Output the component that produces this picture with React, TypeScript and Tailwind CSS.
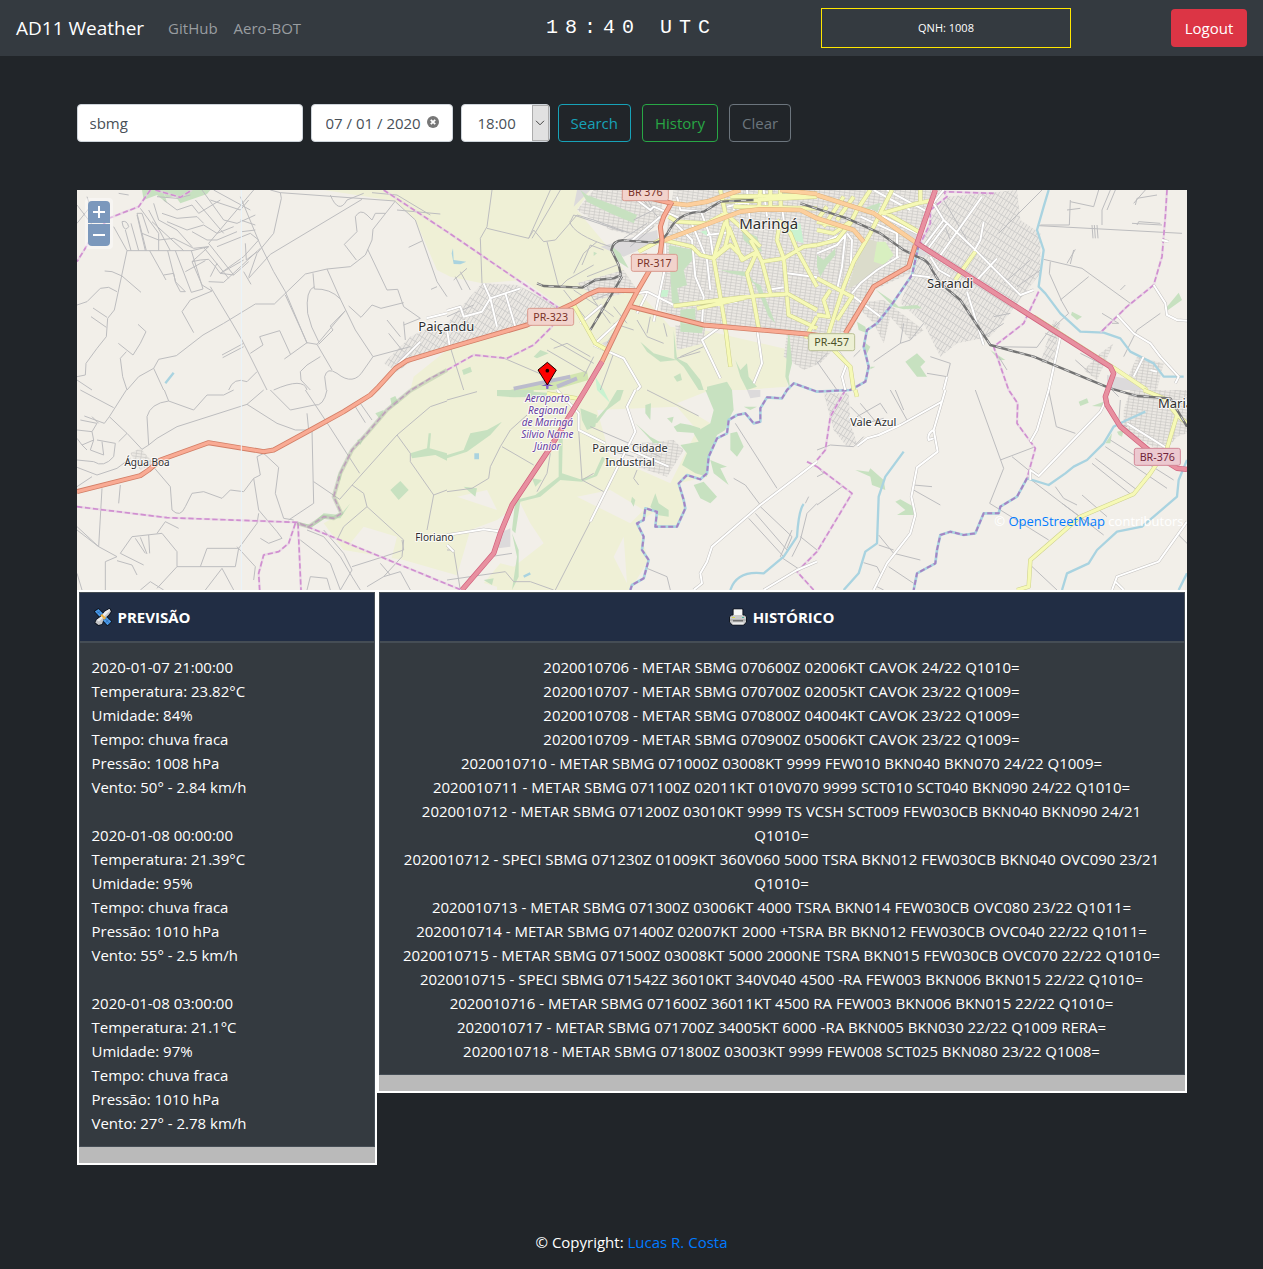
import { useState } from 'react';

const forecast = [
  ['2020-01-07 21:00:00', '23.82°C', '84%', '1008 hPa', '50° - 2.84 km/h'],
  ['2020-01-08 00:00:00', '21.39°C', '95%', '1010 hPa', '55° - 2.5 km/h'],
  ['2020-01-08 03:00:00', '21.1°C', '97%', '1010 hPa', '27° - 2.78 km/h'],
];

const history = [
  '2020010706 - METAR SBMG 070600Z 02006KT CAVOK 24/22 Q1010=',
  '2020010707 - METAR SBMG 070700Z 02005KT CAVOK 23/22 Q1009=',
  '2020010708 - METAR SBMG 070800Z 04004KT CAVOK 23/22 Q1009=',
  '2020010709 - METAR SBMG 070900Z 05006KT CAVOK 23/22 Q1009=',
  '2020010710 - METAR SBMG 071000Z 03008KT 9999 FEW010 BKN040 BKN070 24/22 Q1009=',
  '2020010711 - METAR SBMG 071100Z 02011KT 010V070 9999 SCT010 SCT040 BKN090 24/22 Q1010=',
  '2020010712 - METAR SBMG 071200Z 03010KT 9999 TS VCSH SCT009 FEW030CB BKN040 BKN090 24/21 Q1010=',
  '2020010712 - SPECI SBMG 071230Z 01009KT 360V060 5000 TSRA BKN012 FEW030CB BKN040 OVC090 23/21 Q1010=',
  '2020010713 - METAR SBMG 071300Z 03006KT 4000 TSRA BKN014 FEW030CB OVC080 23/22 Q1011=',
  '2020010714 - METAR SBMG 071400Z 02007KT 2000 +TSRA BR BKN012 FEW030CB OVC040 22/22 Q1011=',
  '2020010715 - METAR SBMG 071500Z 03008KT 5000 2000NE TSRA BKN015 FEW030CB OVC070 22/22 Q1010=',
  '2020010715 - SPECI SBMG 071542Z 36010KT 340V040 4500 -RA FEW003 BKN006 BKN015 22/22 Q1010=',
  '2020010716 - METAR SBMG 071600Z 36011KT 4500 RA FEW003 BKN006 BKN015 22/22 Q1010=',
  '2020010717 - METAR SBMG 071700Z 34005KT 6000 -RA BKN005 BKN030 22/22 Q1009 RERA=',
  '2020010718 - METAR SBMG 071800Z 03003KT 9999 FEW008 SCT025 BKN080 23/22 Q1008=',
];

/* Map line work. Each sheet covers 1110 x 600 units of the 3330 x 1200 map. */
type Sheet = { x: number; y: number; tracks: string; white: string; yellow: string; wood: string };

const sheets: Sheet[] = [
  {
    x: 0,
    y: 0,
    tracks:
      'M150 182L345 182L395 170M150 182L112 360L92 385L88 440L60 475L27 520L25 555L0 560M110 110L150 182M218 182L267 270M260 255L290 250L295 275L325 305L310 305L297 280L272 182M295 182L343 307L378 297L343 182M345 215L375 285L405 303M180 70L208 182M190 55L245 130L245 182M180 70L195 70L215 130M230 40L245 90L300 120L345 170M215 60L280 182M225 95L320 182M260 30L300 60L345 45L365 70L430 30M255 70L300 85L360 80L380 100M270 95L330 120L380 105L420 130L470 110M195 130L245 150L290 145L350 175L395 170M345 125L390 150L420 150L480 125M355 30L440 130M375 0L440 90L480 100L535 75M395 170L345 215L370 210L395 208L415 230L430 250L500 210M395 160L470 255M380 172L455 265M325 245L385 212M530 0L395 160M420 170L520 130L545 150L500 200L430 250L470 255L515 215M400 260L420 220M395 275L440 277L550 175M400 30L490 60L515 30M240 20L300 25L340 15M205 182L180 75M162 100L185 182M145 120L162 182M135 95Q150 90 155 110Q145 125 138 108ZM410 0L520 60M505 160L508 210L540 185M490 90L535 105M495 125L535 120M400 290L460 390L495 450L540 540L570 600M490 20L550 165L590 245L625 305L690 460M0 345L30 335L70 295L95 292L120 305M83 243L105 245L135 258L192 307M48 354L90 382M42 380L88 412M183 403L207 425L190 460L168 495L124 460M148 485L130 505L137 560L150 600M315 365L340 330L405 303M315 365L350 428M150 600L185 560L230 535L245 508L298 497L378 435L440 400L535 342L592 342L685 252L750 237L820 230L865 195L885 150L888 118L955 33L610 8L580 0M610 8L613 25L590 130L540 190L515 262M855 28L580 193L515 265M500 245L522 283M955 35L1015 90L1080 275L1110 320M838 210L802 163L840 125L835 80Q850 55 870 75L885 90L895 70L925 70M872 178L930 300L962 298L980 350L1030 385M750 237L790 327L835 420L888 500L860 540Q830 590 780 550Q750 530 743 560L748 600M708 250L712 297Q760 295 790 327M712 290Q685 300 692 370Q700 410 725 455M625 315L690 458L720 463L805 362L760 408L768 420L725 463M690 458L622 507M720 463L765 540M520 490L558 465L548 440L608 422L640 492M435 495L500 460M437 503L500 470M815 348L852 382L885 345L912 355L980 338M888 500L1000 470M995 172L1035 153M1062 298L1080 290M0 570L45 600M230 535L260 600M760 15Q785 75 810 30L860 10M455 600Q470 560 510 575L540 545M590 600Q680 560 690 600M670 545L690 525L730 500M670 545L672 570L700 600M980 405L1030 385M980 395L985 450M930 390L970 440M935 430L975 480M885 8L960 15L1060 75M960 60L1090 72M0 45L50 110M0 100L40 50L30 20M125 10L155 15',
    white: 'M1048 385L1110 370M1030 455L965 520',
    yellow: '',
    wood: 'M195 0L260 0L265 25L295 18L310 40L390 12L400 0L260 0L270 40L240 15L200 30Z',
  },
  {
    x: 1110,
    y: 0,
    tracks:
      'M135 0L120 110L100 145L105 280M120 115L245 145L310 0M245 145L260 120L290 155L325 150L390 75L440 90L550 130M340 0L255 145M300 155L335 290M370 95L380 75L530 125M368 95Q380 135 490 170M470 180L430 165L405 225M410 190L380 250M410 190L450 155M20 270L60 235M25 260L45 300M40 245L70 300M420 260L510 225M340 290L360 270L440 225M420 290L440 330L510 300M350 300L420 390M380 300L470 360M440 330L490 400M460 350L500 380M500 350L540 400M550 200L600 190M590 10L620 60L560 90M580 20L640 90M620 110L550 170M600 100L530 145M0 440L50 600M160 500L300 560M310 445L440 520M300 480L420 550M320 475L360 460L430 500M540 360L480 460M500 400L560 420M570 390L600 440L650 460M610 380L600 430M690 505L760 485M700 500L770 470M650 400L660 440M500 490L460 600M440 500L410 560M0 380L80 345',
    white:
      'M0 362L40 350L50 380L105 365L130 325L220 295M110 280L130 325L150 410M175 310L205 410M0 420L10 480M440 465L530 505L580 590L570 600M450 455L520 390L545 350M570 310L600 305L680 345M600 310L570 370M655 160L655 230L640 300L620 395M400 400L465 345M570 30L610 60L620 50L700 85M550 155L640 80M685 100L735 150L745 260L770 320L765 400M730 90L780 210L790 300M690 20L700 60L780 65M760 60L790 140L800 210M820 410L765 450L820 565M930 415L945 520L920 580M770 350L870 335M960 300L1010 292M1020 250L1110 262M840 50L970 20M860 60L870 30M950 0L960 80M1000 10L1010 90M900 0L910 110M780 135L860 125',
    yellow:
      'M820 0L835 70L845 130L835 170L800 205L760 195L735 170L650 150M835 70L880 110L940 170M1110 20L830 35M940 0L935 60M970 0L970 60M1000 0L1002 60M835 95L800 205L820 320L835 410L850 530M845 110L885 210L930 185L910 150M800 205L850 165L890 205M930 185L910 230L900 250L918 320L935 415M930 185L945 215L1010 205L1070 170L1110 165M945 215L970 310M1010 205L1020 310L1110 360M1020 320L1025 375L1110 415M680 348L820 330L920 318L1020 312M835 70L780 100L690 95L665 80M1010 205L990 150L1000 90M1050 180L1030 130L990 90M1050 180L1110 290M640 150L575 185M375 335L445 460L480 480M1060 0L1075 20L1110 10M860 50L1110 55M850 20L1110 15M1110 380L1075 445M750 355L900 322',
    wood: 'M400 0L420 15L500 45L570 75L560 100L490 70L420 35ZM490 165L520 190L545 235L515 215ZM665 165L740 180L745 200L710 240L720 285L690 295L700 350L675 340ZM700 360L745 355L745 400L700 400ZM700 400L770 405L765 430L700 425ZM885 120L930 140L945 185L925 180L890 150ZM440 185L450 190L440 198ZM820 240L900 245L920 275L940 285L985 400L965 380L925 285L900 260L850 250ZM680 420L690 505L720 520L760 570L770 600L755 600L710 530L682 505ZM580 455L620 490L690 510L640 515L600 485ZM680 560L700 550L705 570L690 575ZM865 510L880 540L900 520L905 560L930 590L900 600L880 560ZM1025 410L1035 520L1025 560L1030 600L1015 560ZM260 500L280 480L305 490L270 505ZM45 540L70 530L75 545L50 555ZM780 590L840 575L855 600L780 600Z',
  },
  {
    x: 2220,
    y: 0,
    tracks:
      'M760 30L757 105L670 105M665 107L1095 130M760 35L830 50L845 0M855 105L855 60L880 0M870 60L895 0M675 0L545 130M945 100L1035 105M960 105L965 95L1030 100M680 208L795 235L940 340L905 375L850 425M700 215L697 250L735 335L755 370L690 430L660 472M730 330L815 260M530 470L660 472M750 220L775 178M760 222L770 180M685 430L720 445M855 370L905 400L885 400M775 510L820 550M790 490L860 525M800 475L870 515M925 285L910 300M825 105L828 145M832 105L835 145M840 105L843 145M950 40L985 0M955 45L960 25L1020 15M350 20L400 150M380 30L450 150M260 400L250 460L170 515M320 400L280 450L250 460M1030 370L960 420L920 500M545 500L570 540M500 440L560 400M530 380L580 370M640 210L560 280M670 240L600 290M0 515L60 600M30 490L0 520M40 430L60 460M340 500L400 520L390 560L330 550M130 480L110 500M750 60L790 55',
    white:
      'M0 190L60 165L85 135L75 230L60 300M90 130L105 150L100 250M245 200L180 240L130 280L105 310M340 25L380 90L470 175L610 315L650 300M495 20L360 210M500 95L490 150L470 185M390 100L330 180M380 90L320 170M340 200L365 240L400 260M540 205L480 270M450 305L500 465M285 255L340 262M110 320L190 380M390 560L380 600M730 440L695 600M900 375L950 430L1000 460L1030 500L1085 560L1075 580M1010 285L1045 340L1050 375L1080 390L1110 392M980 500L950 560M1000 540L1020 545M60 480L90 520L75 560L85 600M1035 150L1055 155M160 60L300 130M210 0L340 70M170 0L280 60M0 165L80 130M130 80L240 130L240 200M380 0L340 50',
    yellow:
      'M160 0L120 60L100 100L60 150L0 165M225 0L160 130L110 215L80 290L35 430M0 95L70 110M0 120L50 130L100 95M195 70L300 40L350 30M200 65L305 125M310 0L310 40M0 265L105 320L60 390M0 375L35 380L20 330L40 300M50 480L100 530L110 600M475 185L415 270M650 380L900 540L990 600M110 20L60 90M80 20L20 110M30 50L0 90',
    wood: 'M140 55L190 38L180 70L150 70ZM265 515L300 490L325 515L310 530L330 560L300 560ZM1050 350L1085 308L1095 330L1050 362ZM765 365L795 380L780 390L762 375ZM175 298L230 335L245 350L300 345L315 355L260 358L230 350ZM0 195L20 210L55 175L55 195L30 225L10 260L0 230ZM120 395L145 410L150 430L125 420ZM160 530L175 530L160 538ZM520 480L565 510L545 510ZM140 455L160 470L145 500Z',
  },
  {
    x: 0,
    y: 600,
    tracks:
      'M148 0L97 80L82 100L22 78M97 80L150 130L195 178L215 165L210 80Q220 40 275 33L262 0M275 33L350 60L390 15L440 15L470 0M10 0L110 53M215 165L240 145L300 110L510 43L560 0M510 43L600 100L655 120L705 120L710 340L635 390M710 275L788 328L830 280L960 135L1060 50L1110 33M960 135L1000 190L1000 215L1070 315L1110 300M1070 315L1050 420M685 0L750 98L848 250M750 0Q740 50 712 45L640 60L580 0M825 285L860 310L870 350L980 450L975 500L920 560M870 350L800 410L780 450M233 235L280 290L285 360Q310 385 325 350L345 310L380 305L435 325L460 300L500 305L530 265L550 255L540 200L560 190L605 232L595 310L620 385L650 390M530 265L545 360L600 425L615 445L575 460L550 445M545 370L540 400L485 475L390 475L370 530M485 475L475 530L300 530L300 485L255 430L165 440L130 490M300 530L240 595M75 295L65 470M65 470L0 410M0 232L60 255L120 235L160 205M0 290L45 260M130 285L125 340M0 420L65 470L120 500L85 515L85 600M120 512L165 525L180 555M130 490L200 525M175 445L205 490M190 442L210 492M215 435L218 490M240 430L265 395L305 415M0 120L45 125L50 150L15 165L0 145M10 90L60 100L45 125M45 80L65 100M60 150L115 160L110 200Q80 235 50 215L0 210M50 150L40 180L80 195L75 155M15 165L30 180M150 130L125 155M435 535L385 600M435 535L470 600M480 470L535 530L530 570M670 450L760 520L790 600M690 420L740 440L790 500L825 560L850 600M740 420L800 490L825 540L790 600M690 600L700 560L750 565L760 600M825 530L920 500L980 480L975 450M870 590L920 560L970 545L1000 600M910 520L940 555M835 50L865 98M850 40L885 90M0 550L15 600M190 600L220 575L260 600M695 120L690 70',
    white: '',
    yellow: '',
    wood: 'M940 300L970 273L995 300L965 330ZM1000 190L1050 175L1055 130L1062 130L1058 175L1110 190L1110 212L1075 195L1005 205ZM940 25L955 18L965 40L945 50ZM895 70L920 60L910 90ZM660 395L700 405L740 370L790 375L820 340L790 385L745 385L700 415ZM840 150L860 145L850 165ZM780 265L800 220L790 270Z',
  },
  {
    x: 1110,
    y: 600,
    tracks:
      'M0 30L90 5M240 75L190 120L160 170L130 230L125 265L75 295L0 305M165 170L260 225M310 190L300 250L270 305M395 120L405 270L470 305M405 270L440 250M430 395L325 600M430 110L640 200M600 0L755 78M865 100L990 295M860 265L895 285L940 345M905 385L1010 500M925 370L1020 480M940 350L1035 440L1020 475M1035 420L1000 500L1060 540M1110 340L1080 370L1060 450L1035 500M1085 320L1075 340M1060 440L1110 480M600 535L660 560L670 600M0 480L20 480L40 600M130 500L195 490M0 570L175 545L200 575L250 575L320 600M480 180L560 200M570 240L560 265L575 285',
    white:
      'M330 0L395 70L395 120L475 160M565 0L540 50L565 125L430 395M550 180L665 230M1110 215L940 345L795 470L780 515L760 550L765 580L740 600M0 435L110 418L165 425M0 465L20 485M950 600L1050 540L1110 515',
    yellow: 'M300 10L390 25',
    wood: 'M150 0L260 0L260 5L320 10L310 20L200 22L150 18ZM400 55L450 75L445 110L420 120L405 90ZM660 85L680 80L675 100ZM680 110L700 100L730 105L760 115L755 130L690 125ZM775 0L855 0L860 60L845 90L835 120L810 135L790 190L780 260L745 250L705 225L720 190L700 165L755 155L740 130L790 100L800 60ZM565 100L610 140L645 160L620 160ZM595 45L612 40L610 90L595 70ZM850 130L870 125L890 170L870 200L850 180ZM740 285L770 275L810 320L790 340L760 325ZM790 210L840 230L820 235L845 285L800 250ZM610 350L625 310L635 340L665 360L665 380L630 375ZM555 320L565 330L560 350L552 335ZM510 0L530 0L520 30L480 60L450 100L440 95L480 50ZM335 110L348 110L345 250L400 268L440 255L465 200L475 205L450 258L405 275L340 270L280 320L220 335L205 430L195 420L205 330L265 315L335 260ZM255 265L285 270L265 290ZM0 195L50 180L70 130L120 120L165 95L130 135L60 185L0 205ZM50 290L90 295L85 320ZM195 430L215 480L215 560L195 600L210 500ZM110 570L140 565L135 585ZM890 50L930 50L910 60Z',
  },
  {
    x: 2220,
    y: 600,
    tracks:
      'M475 0L560 235L518 340L695 450M695 0L718 110L775 130M550 210L650 172M585 200L640 245M630 260L860 435M825 220L940 312M835 205L960 300M865 170L1050 295M880 150L1070 270M735 340L830 410M795 315L870 380M715 290L740 325L780 345M0 345L75 290M0 230L20 250L0 260M290 285L345 290M290 300L370 345M185 435L230 490L310 510M185 465L230 480M215 530L290 580M140 518L180 530L190 550M180 590L200 600M220 0L270 90M235 0L260 60M640 525L720 600M1085 435L1110 460M120 80L190 40L210 70M110 110L200 85M100 50L160 110M130 40L180 100M910 30L905 100L930 110M885 0L905 20M0 180L40 165L110 170L140 140',
    white:
      'M385 0L350 120L362 185L300 232L283 320L295 375L280 430L210 520L170 600M350 120Q330 130 335 150L350 145M695 0L660 120L640 155M865 35L850 65L665 258L640 240L640 270M375 35L250 105L185 135L150 145L120 168M930 100L1050 175M1110 395L1025 515L900 560L885 600M895 575L920 600',
    yellow: 'M115 0L120 20M980 0L1040 25L1080 75L1110 100M1080 75L1050 175L1000 250L950 312L790 380L640 510L635 590L600 600',
    wood: 'M115 240L155 245L160 235L200 270L205 300L165 285L160 260ZM235 335L250 328L290 350L290 375L240 375L265 360ZM785 35L810 25L815 38L790 48ZM825 48L860 35L855 50ZM865 160L885 130L880 160ZM900 125L920 120L915 140L905 135Z',
  },
];

const fineStreets = [
  'M1000 440L1060 410L1110 400L1215 280L1320 285L1450 350L1350 400L1110 478L1010 510L960 545L920 520Z',
  'M2560 80L2610 20L2820 0L2830 90L2890 130L2890 250L2790 380L2740 440L2640 460L2590 500L2540 400L2470 340L2520 210Z',
  'M2240 610L2315 610L2320 700L2340 760L2310 770L2270 720Z',
  'M2930 510L2950 400L2930 390L2890 520Z',
];

const streets = [
  'M1550 0L1750 0L1760 90L1690 140L1600 120L1500 60Z',
  'M1500 280L1640 240L1680 300L1560 330Z',
  'M1790 0L2590 0L2520 160L2500 250L2390 300L2320 425L2230 520L2180 540L2120 500L2130 430L1880 405L1750 360L1760 180Z',
  'M1795 405L1885 410L1880 460L1800 480Z',
  'M3070 490L3110 460L3060 570L3020 540Z',
  'M3140 660L3160 600L3330 600L3330 730L3300 740L3260 790L3140 720Z',
  'M3180 500L3260 520L3240 600L3140 590Z',
  'M1680 760L1790 750L1820 780L1770 860L1680 830Z',
  'M160 790L190 775L230 820L190 840Z',
  'M2330 340L2420 330L2540 420L2500 450L2440 380L2420 460L2390 400Z',
];

const paths = {
  primary:
    'M0 905L190 857L215 840L250 810L395 758L560 785L590 780L700 720L800 665L880 615L905 590L955 535L990 512L1110 475L1350 405L1490 340L1530 315L1565 300L1680 302M1785 35L1760 80L1750 110L1755 150L1750 190L1715 245L1680 305L1630 400L1575 515M1700 20L1785 40M1655 348L1880 405L2190 432L2290 445M2515 165L2495 230L2390 290L2305 430',
  trunk:
    'M1575 515L1525 600L1415 780L1305 945L1270 1030L1250 1090L1155 1200M2575 0L2520 160L3100 530L3110 550L3085 620L3090 645L3130 710L3220 785L3300 835L3330 838',
  secondary:
    'M1770 38L1830 45L1890 35L1990 0M1750 155L1990 65L2050 58L2170 60L2220 85L2330 120L2360 155M2220 15L2390 70L2520 160M2110 0L2220 12',
  rail: 'M1380 280L1400 288L1515 293L1555 270L1610 265L1632 255L1625 225L1603 180Q1610 145 1650 152L1735 158Q1760 155 1780 115Q1810 65 1880 65L1930 35L2030 30M1635 260L1600 320L1540 420M2170 40L2310 85L2410 130L2480 180L2520 200Q2555 210 2565 240L2590 280L2650 330L2710 420L2740 465L2870 500L3100 595L3180 618L3280 625L3330 710',
  river:
    'M2915 0L2900 50L2880 120L2900 180L2885 290L2905 310L2950 370L3010 425L3080 428L3130 445L3160 485L3230 520L3260 560L3320 560M2850 865L2915 885L2965 850L2990 830L3030 810L3080 760L3110 710L3150 690L3205 665M2480 785L2425 860L2405 920L2400 1060L2365 1085L2345 1150L2300 1200M3330 810L3305 870L3300 920L3195 1010L3120 1025L3060 1080L3035 1120L2970 1150L2955 1200M2180 942Q2165 960 2160 1040L2120 1100L2060 1150Q1980 1140 1960 1200M3330 1150L3305 1200M265 580L290 548M1340 1160L1360 1150',
  border:
    'M220 0L185 50L95 85L40 150L0 215M235 0L310 22L345 0M920 0L1110 125L1440 350L1425 410L1370 465L1290 505L1190 495L1110 540L1060 565L1000 602L930 660L870 730L825 780L790 850L770 920L793 970L770 985L740 980L695 1010L660 1000M0 950L270 983L660 997L1250 1240M663 1000L672 1200M655 1000L635 1060L605 1085L560 1095L545 1150L548 1200M3270 0L3265 80L3255 200L3230 285L3150 350L3070 428M2885 305L2840 400L2750 470L2795 600L2822 640L2820 700L2875 775L2850 865M2305 600L2260 680L2245 780L2220 810M2220 830L2325 910L2220 1085L2160 1145L2210 1200M2190 815L2220 830M2525 170L2560 100L2560 60L2610 20L2600 5L2750 10',
  ford: 'M2525 165L2505 255L2440 350L2400 400L2370 420L2360 470L2375 530L2365 575L2320 600L2220 605L2150 580L2130 600L2115 625L2070 622L2050 655L2050 695L2030 700L2005 670L1980 675L1955 690L1950 730L1920 745L1895 800L1890 850L1870 868L1830 855L1805 880L1820 930L1825 955L1800 1010L1735 1010L1740 965L1705 955L1700 990L1680 1000L1700 1040L1695 1080L1715 1110L1700 1165L1665 1185L1660 1200M2850 865L2820 920L2770 950L2765 970L2720 970L2695 1030L2660 1035L2620 1025L2590 1035L2580 1080L2575 1120L2520 1150L2510 1200',
};

function Shield({ x, y, label, fill, line, ink }: { x: number; y: number; label: string; fill: string; line: string; ink: string }) {
  return (
    <g>
      <rect x={x} y={y} width="138" height="51" rx="6" fill={fill} stroke={line} strokeWidth="3" />
      <text x={x + 69} y={y + 37} textAnchor="middle" fontSize="32" fill={ink}>{label}</text>
    </g>
  );
}

function MapDrawing() {
  return (
    <svg viewBox="0 0 3330 1200" preserveAspectRatio="xMidYMid slice" className="block h-[400px] w-full" role="img" aria-label="Mapa de Maringá" fontFamily="'Noto Sans', sans-serif">
      <defs>
        <pattern id="streets" width="15" height="9" patternUnits="userSpaceOnUse" patternTransform="rotate(8)">
          <rect width="15" height="9" fill="#ebe8e3" />
          <path d="M0 1H15M1 0V9" stroke="#cbc9c7" strokeWidth="2.5" />
        </pattern>
        <pattern id="streetsSteep" width="10" height="22" patternUnits="userSpaceOnUse" patternTransform="rotate(32)">
          <rect width="10" height="22" fill="#ebe8e3" />
          <path d="M0 1H10M1 0V22" stroke="#cbc9c7" strokeWidth="2.5" />
        </pattern>
      </defs>
      <rect width="3330" height="1200" fill="#f2efe9" />
      <path d="M740 0L955 33L1015 90L1080 240L1120 260L1215 280L1340 270L1450 350L1400 400L1110 480L1010 560L1000 600L930 660L870 730L825 780L790 850L770 920L793 970L740 1000L800 1080L980 1110L1260 1190L1260 1200L1660 1200L1715 1110L1680 1000L1740 960L1740 1010L1800 1010L1825 955L1805 880L1890 860L1900 700L1800 640L1900 600L2000 600L2130 590L2140 480L1880 420L1780 410L1680 300L1600 180L1500 60L1540 0Z" fill="#eff0d6" />
      <path d="M1180 1020L1260 990L1330 940L1360 1000L1400 1060L1310 1130L1270 1120L1220 1180L1130 1190ZM1560 660L1800 650L1860 720L1780 880L1600 800ZM1600 900L1700 960L1660 1000L1500 920ZM1610 1100L1640 1040L1650 1180ZM1140 920L1230 900L1260 960ZM860 1010L960 1040L940 1120L820 1060Z" fill="#f2efe9" />
      {fineStreets.map((d) => (
        <path key={d} d={d} fill="url(#streetsSteep)" />
      ))}
      {streets.map((d) => (
        <path key={d} d={d} fill="url(#streets)" />
      ))}
      <path d="M1570 170L1740 120L1745 155L1640 200ZM2500 105L2560 190L2530 200L2480 140ZM2010 600L2050 600L2050 620L2020 625ZM1900 595L1935 600L1930 620L1895 615ZM3090 555L3170 570L3200 600L3090 600ZM1575 460L1620 440L1600 480ZM1500 0L1540 0L1490 50ZM1265 1030L1300 1015L1300 1070L1265 1075ZM970 500L990 480L980 520L940 545Z" fill="#dcdadb" />
      <path d="M2310 300L2350 180L2370 145L2400 155L2420 220L2360 270Z" fill="#dbdccb" />
      <path d="M2400 155L2425 155L2450 195L2420 225L2390 215Z" fill="#d8efc0" />
      <path d="M2360 55L2412 38L2400 68ZM1750 300L1775 300L1770 320L1750 320ZM2135 110L2170 100L2180 160L2150 150ZM1555 560L1580 600L1600 640L1560 600ZM1870 125L1890 120L1895 140Z" fill="#c9f2d0" />
      <g fill="#c7e1c0">
        {sheets.map((s) => (
          <path key={`${s.x}-${s.y}`} d={s.wood} transform={`translate(${s.x},${s.y})`} />
        ))}
      </g>
      <path d="M1300 600L1530 542L1535 570L1430 600Z" fill="#d2e5b0" />
      <path d="M1310 596L1480 560M1440 590L1500 565" stroke="#bbbbcc" strokeWidth="12" fill="none" />
      <path d="M1128 175L1130 210L1168 215L1150 223L1130 222L1124 190ZM1192 790H1206V808H1192Z" fill="#aad3df" />
      <g fill="none" strokeLinejoin="round">
        <g stroke="#bdbdbf" strokeWidth="3">
          {sheets.map((s) => (
            <path key={`${s.x}-${s.y}`} d={s.tracks} transform={`translate(${s.x},${s.y})`} />
          ))}
        </g>
        <path d={paths.river} stroke="#a9d3e0" strokeWidth="7" />
        <path d={paths.border} stroke="#e6cbe4" strokeWidth="7" strokeOpacity="0.6" />
        <path d={paths.border} stroke="#d08fd0" strokeWidth="5" strokeDasharray="16 8" />
        <path d={paths.ford} stroke="#a9d3e0" strokeWidth="8" />
        <path d={paths.ford} stroke="#a583c4" strokeWidth="6" strokeDasharray="15 8" />
        <path d="M1000 602L930 660L870 730L825 780L790 850L770 920L793 970L770 985L740 980L695 1010L660 1000M1110 540L1000 602" stroke="#9fbf95" strokeWidth="12" strokeOpacity="0.4" />
        {sheets.map((s) => (
          <g key={`${s.x}-${s.y}`} transform={`translate(${s.x},${s.y})`}>
            <path d={s.white} stroke="#c4c2c0" strokeWidth="9" />
            <path d={s.white} stroke="#ffffff" strokeWidth="6" />
          </g>
        ))}
        {sheets.map((s) => (
          <g key={`${s.x}-${s.y}`} transform={`translate(${s.x},${s.y})`}>
            <path d={s.yellow} stroke="#cdd08c" strokeWidth="13" />
            <path d={s.yellow} stroke="#f6f9b6" strokeWidth="10" />
          </g>
        ))}
        <path d={paths.secondary} stroke="#dfb077" strokeWidth="14" />
        <path d={paths.secondary} stroke="#fccf9d" strokeWidth="11" />
        <path d={paths.rail} stroke="#737373" strokeWidth="7" />
        <path d={paths.rail} stroke="#d5d5d5" strokeWidth="3" strokeDasharray="16 20" />
        <path d={paths.primary} stroke="#d27e66" strokeWidth="15" />
        <path d={paths.primary} stroke="#f9ab94" strokeWidth="10" />
        <path d={paths.trunk} stroke="#d0607c" strokeWidth="16" />
        <path d={paths.trunk} stroke="#e890a0" strokeWidth="12" />
        <path d="M493 0V1200" stroke="#e9f3fb" strokeWidth="3" />
      </g>
      <Shield x={1636} y={-19} label="BR 376" fill="#f2d3cc" line="#d99a8e" ink="#7a3228" />
      <Shield x={1663} y={193} label="PR-317" fill="#f2d3cc" line="#d99a8e" ink="#7a3228" />
      <Shield x={1352} y={355} label="PR-323" fill="#f2d3cc" line="#d99a8e" ink="#7a3228" />
      <Shield x={2195} y={431} label="PR-457" fill="#edf0d4" line="#b9bf94" ink="#4b5026" />
      <Shield x={3172} y={775} label="BR-376" fill="#ecc9d0" line="#d28797" ink="#702339" />
      <g fill="#2e2e2e" stroke="#ffffff" strokeWidth="6" strokeOpacity="0.8" strokeLinejoin="round" paintOrder="stroke" textAnchor="middle" fontSize="39">
        <text x="2075" y="118" fontSize="45">Maringá</text>
        <text x="1108" y="422">Paiçandu</text>
        <text x="2619" y="294">Sarandi</text>
        <text x="3243" y="654" textAnchor="start">Marialva</text>
        <g fontSize="33">
          <text x="210" y="827" fontSize="30">Água Boa</text>
          <text x="1072" y="1053" fontSize="30">Floriano</text>
          <text x="2389" y="708">Vale Azul</text>
          <text x="1659" y="786">Parque Cidade</text>
          <text x="1659" y="828">Industrial</text>
        </g>
        <g fill="#6640a0" fontSize="30" fontStyle="italic">
          <text x="1411" y="635">Aeroporto</text>
          <text x="1411" y="671">Regional</text>
          <text x="1411" y="707">de Maringá</text>
          <text x="1411" y="743">Silvio Name</text>
          <text x="1411" y="779">Júnior</text>
        </g>
      </g>
      <path d="M1411 570L1415 582L1430 588L1415 588L1414 597L1408 597L1407 588L1392 588L1407 582Z" fill="#8461c4" />
      <path d="M1411 517L1438 540L1411 585L1383 540Z" fill="#ff0000" stroke="#1b0000" strokeWidth="3" />
      <circle cx="1411" cy="542" r="5.5" fill="#1b0000" />
    </svg>
  );
}

function SatelliteIcon() {
  return (
    <svg viewBox="0 0 18 18" className="size-[18px]" aria-hidden="true">
      <g stroke="#0c121c" strokeWidth="1.6" strokeLinejoin="round">
        <path d="M.8 3.500L4.500 1L9 5.500L5.500 8.500Z" />
        <path d="M9 12.500L12.500 9L17.300 13.500L13.500 17.200Z" />
        <path d="M11 3.500L15.500 1L17 3.500L14.500 7L9.500 11.500L8 16L4.500 17L1.300 14.500L2.500 12L6.500 9Z" />
      </g>
      <path d="M.8 3.500L4.500 1L9 5.500L5.500 8.500Z" fill="#4c9be8" />
      <path d="M9 12.500L12.500 9L17.300 13.500L13.500 17.200Z" fill="#4c9be8" />
      <path d="M2.600 2.300L7.200 7M2.800 5.400L6.700 3.200M11 10.700L15.500 15.300M11.300 14.900L15 11.300" stroke="#2565b5" strokeWidth=".7" />
      <path d="M11 3.500L15.500 1L17 3.500L14.500 7L9.500 11.500L8 16L4.500 17L1.300 14.500L2.500 12L6.500 9Z" fill="#c4c5c8" />
      <path d="M11 3.500L15.500 1L16 2.500L5 13.500L2.500 12L6.500 9Z" fill="#ececec" />
      <path d="M6.500 7.500L8 6L12 10L10.500 11.500Z" fill="#f0b33e" />
    </svg>
  );
}

function PrinterIcon() {
  return (
    <svg viewBox="0 0 18 18" className="size-[18px]" aria-hidden="true">
      <path d="M4 1H14V7H16L17.500 9V14L15 17H3L.5 14V9L2 7H4Z" fill="#c9c9c9" stroke="#111722" />
      <path d="M5 1.500H13V7H5Z" fill="#f7f7f7" />
      <path d="M1 11H17V13H1Z" fill="#b4b4b4" />
      <path d="M4 12H14V13.500H4Z" fill="#6e6e6e" />
      <path d="M3.500 14.500H14.500V16.500H3.500Z" fill="#ececec" />
      <path d="M3 9H6V10H3Z" fill="#d8d84b" />
      <path d="M13 9H15V10H13Z" fill="#42b7a0" />
    </svg>
  );
}

export default function App() {
  const [station, setStation] = useState('sbmg');
  const [date, setDate] = useState('07 / 01 / 2020');
  const [hour, setHour] = useState('18:00');
  const field = 'h-[38px] rounded border border-[#ced4da] bg-white text-[#495057]';
  const button = 'h-[38px] rounded border px-3';

  return (
    <div className="min-h-screen bg-[#212529] font-['Open_Sans',sans-serif] text-[15px] leading-6 text-white">
      <nav className="flex h-14 items-center bg-[#343a40] px-4">
        <a href="#" className="mr-6 text-[19px]">AD11 Weather</a>
        <div className="flex flex-1 gap-4 text-[#999da0]">
          <a href="#github">GitHub</a>
          <a href="#bot">Aero-BOT</a>
        </div>
        <time className="mr-[104px] font-['Liberation_Mono',monospace] text-[20px] tracking-[7px]">18:40 UTC</time>
        <div className="mr-[100px] flex h-10 w-[250px] items-center justify-center border border-[#ffe600] text-[11px]">QNH: 1008</div>
        <button type="button" className="h-[38px] w-[76px] rounded bg-[#dc3545]">Logout</button>
      </nav>

      <main className="mx-auto max-w-[1140px] px-[15px] pt-12">
        <form className="flex flex-wrap gap-2" onSubmit={(e) => e.preventDefault()}>
          <input aria-label="Station" value={station} onChange={(e) => setStation(e.target.value)} className={`${field} w-[226px] px-3`} />
          <div className="relative">
            <input aria-label="Date" value={date} onChange={(e) => setDate(e.target.value)} className={`${field} w-[142px] pl-[14px]`} />
            <button type="button" aria-label="Clear date" onClick={() => setDate('')} className="absolute top-3 right-[14px]">
              <svg viewBox="0 0 12 12" className="size-3">
                <circle cx="6" cy="6" r="6" fill="#777" />
                <path d="M3.800 3.800L8.200 8.200M8.200 3.800L3.800 8.200" stroke="#fff" strokeWidth="1.800" />
              </svg>
            </button>
          </div>
          <div className="relative">
            <select aria-label="Hour" value={hour} onChange={(e) => setHour(e.target.value)} className={`${field} w-[89px] appearance-none pl-4`}>
              <option>18:00</option>
              <option>19:00</option>
            </select>
            <span className="pointer-events-none absolute top-px right-px flex h-9 w-[17px] items-center justify-center border border-[#adadad] bg-[#e1e1e1]">
              <svg viewBox="0 0 10 6" className="h-1.5 w-2.5" fill="none" stroke="#444"><path d="M1 .8L5 4.800L9 .8" /></svg>
            </span>
          </div>
          <div className="flex gap-[11px]">
            <button type="submit" className={`${button} border-[#17a2b8] text-[#17a2b8]`}>Search</button>
            <button type="button" className={`${button} border-[#28a745] text-[#28a745]`}>History</button>
            <button type="button" className={`${button} border-[#6c757d] text-[#6c757d]`}>Clear</button>
          </div>
        </form>

        <section className="relative mt-12">
          <MapDrawing />
          <div className="absolute top-2 left-2 flex flex-col gap-px rounded bg-white/40 p-[3px]">
            <button type="button" aria-label="Zoom in" className="flex size-[22px] items-center justify-center rounded-t-sm bg-[#7b98bc]">
              <svg viewBox="0 0 12 12" className="size-3" stroke="#fff" strokeWidth="2"><path d="M0 6H12M6 0V12" /></svg>
            </button>
            <button type="button" aria-label="Zoom out" className="flex size-[22px] items-center justify-center rounded-b-sm bg-[#7b98bc]">
              <svg viewBox="0 0 12 12" className="size-3" stroke="#fff" strokeWidth="2"><path d="M0 6H12" /></svg>
            </button>
          </div>
          <p className="absolute right-[3px] bottom-[57px] text-[13px]">
            © <a href="#osm" className="text-[#007bff]">OpenStreetMap</a> contributors
          </p>
        </section>

        <div className="flex items-start">
          <div className="w-[300px] shrink-0 border-2 border-white bg-[#bababa] pb-4">
            <table className="w-full border-collapse bg-[#343a40]">
              <thead>
                <tr>
                  <th className="border border-b-2 border-[#454d55] bg-[#212d44] px-[14px] py-3 text-left font-bold">
                    <span className="flex items-center gap-1.5"><SatelliteIcon />PREVISÃO</span>
                  </th>
                </tr>
              </thead>
              <tbody>
                <tr>
                  <td className="border border-[#454d55] px-3 pt-3 pb-[11px]">
                    {forecast.map(([time, temp, hum, press, wind]) => (
                      <div key={time} className="mb-6 last:mb-0">
                        <p>{time}</p>
                        <p>Temperatura: {temp}</p>
                        <p>Umidade: {hum}</p>
                        <p>Tempo: chuva fraca</p>
                        <p>Pressão: {press}</p>
                        <p>Vento: {wind}</p>
                      </div>
                    ))}
                  </td>
                </tr>
              </tbody>
            </table>
          </div>
          <div className="min-w-0 flex-1 border-2 border-white bg-[#bababa] pb-4">
            <table className="w-full border-collapse bg-[#343a40] text-center">
              <thead>
                <tr>
                  <th className="border border-b-2 border-[#454d55] bg-[#212d44] px-3 py-3 font-bold">
                    <span className="flex items-center justify-center gap-1.5"><PrinterIcon />HISTÓRICO</span>
                  </th>
                </tr>
              </thead>
              <tbody>
                <tr>
                  <td className="border border-[#454d55] px-4 pt-3 pb-[11px]">
                    {history.map((line) => (
                      <p key={line}>{line}</p>
                    ))}
                  </td>
                </tr>
              </tbody>
            </table>
          </div>
        </div>
      </main>

      <footer className="pt-[65px] pb-[14px] text-center">
        © Copyright: <a href="#author" className="text-[#007bff]">Lucas R. Costa</a>
      </footer>
    </div>
  );
}
